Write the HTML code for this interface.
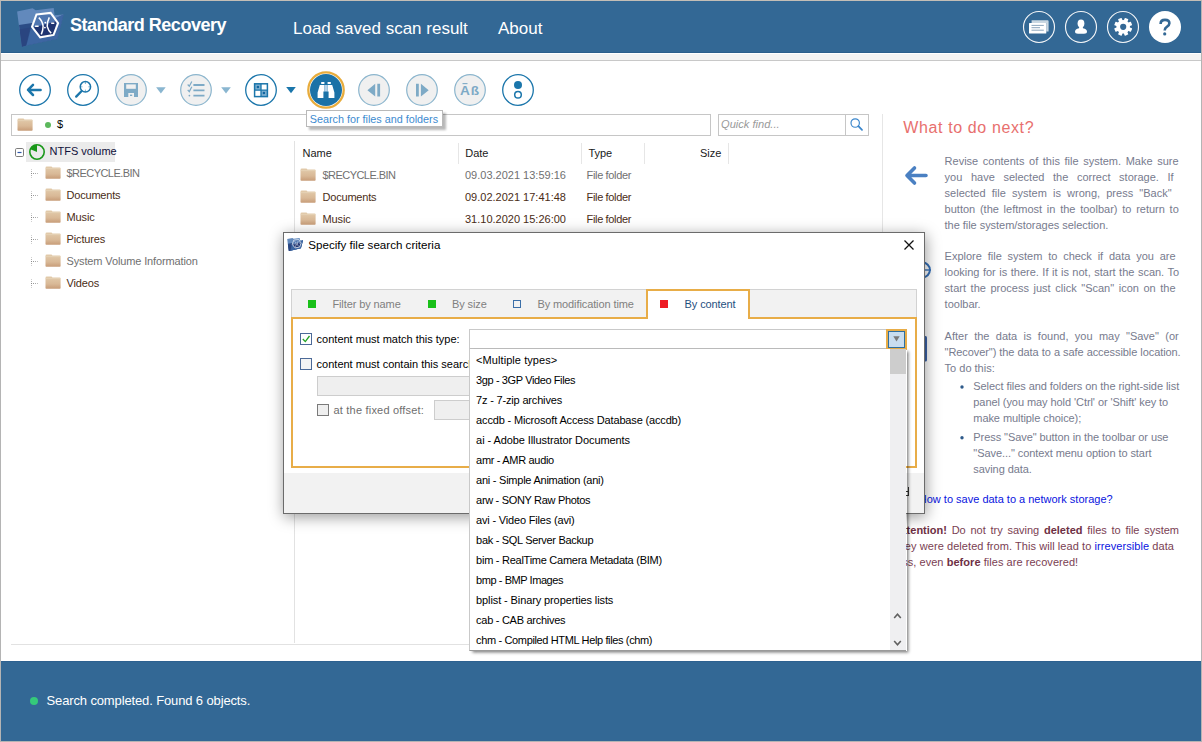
<!DOCTYPE html>
<html><head><meta charset="utf-8">
<style>
*{margin:0;padding:0;box-sizing:border-box}
html,body{width:1202px;height:742px;overflow:hidden;background:#fff;font-family:"Liberation Sans",sans-serif}
.a{position:absolute;white-space:nowrap;line-height:1}
svg{position:absolute;overflow:visible}
#frame{position:absolute;left:0;top:0;width:1202px;height:742px;border:1px solid #b4b4b4;border-top-color:#c4beb6}
#hdr{position:absolute;left:1px;top:1px;width:1200px;height:52px;background:#336895;border-bottom:1px solid #2a5e8c}
#strip{position:absolute;left:1px;top:53px;width:1200px;height:8px;background:#f3f3f3;border-top:1px solid #fff;border-bottom:1px solid #c8c8c8}
#status{position:absolute;left:1px;top:661px;width:1200px;height:80px;background:#336895;border-top:1px solid #2d6190}
.t11{font-size:11px}
</style></head><body>
<div id="frame"></div>
<div id="hdr"></div>
<div id="strip"></div>

<!-- header content -->
<svg style="left:0;top:0" width="1202" height="53">
  <g id="logo"><!-- logo folder -->
  <path d="M17.1 11.4 L32.6 8.3 L35.7 10.2 L53.7 8 L54.6 15.2 L63.6 14.5 L57.4 38.7 L26.4 45.5 L22 46.8 L19.5 30 Z" fill="#6289bc"/>
  <path d="M19 25 L54.9 19.5 L63.6 14.5 L57.4 38.7 L26.4 45.5 L22 46.8 L19.8 31 Z" fill="#2b4c86"/>
  <path d="M19.6 29.5 L30 27.5 L26 45.5 L22 46.8 Z" fill="#2a4580"/>
  <path d="M30.7 28.8 L63.6 14.5 L57.4 38.7 L26.4 45.5 Z" fill="#3d66a2"/>
  <path d="M37 15 L50.6 13.2 L57.8 23.2 L53.4 34.6 L40.4 37 L32.4 26.9 Z" fill="#4f76b0"/>
  <path d="M33.5 27.5 L57 21 L53.4 34.6 L40.4 37 Z" fill="#1f3470"/>
  <polygon points="36.5,14.4 50.6,12.9 58.1,23.2 53.6,34.9 40.2,37.3 32,26.9" fill="none" stroke="#fff" stroke-width="2"/>
  <path d="M38.8 17.6 Q42.6 21.2 43.1 26.3 Q43 31 41.3 34.4 M49.3 17.3 Q47.2 21.5 47.2 26.3 Q48.2 30.5 51.2 33.1 M35.1 26.2 H38.6 M51.2 23.3 H54.3" fill="none" stroke="#fff" stroke-width="1.5"/>
  <circle cx="45.3" cy="22.6" r="0.9" fill="#fff"/><circle cx="44.9" cy="27.6" r="0.9" fill="#fff"/>
  </g>
  <!-- right icons -->
  <circle cx="1039" cy="27" r="15.5" fill="none" stroke="#f4f6f8" stroke-width="1.15"/>
  <path d="M1031.6 20.2 H1047.6 Q1048.6 20.2 1048.6 21.2 V31.6 H1046.3 V23 H1031.6 Z" fill="#c9d7e2"/>
  <rect x="1029" y="23" width="17.3" height="10.6" rx="0.6" fill="#fff"/>
  <path d="M1031.5 25.4 H1043.8 M1031.5 27.7 H1040 M1031.5 30.2 H1043.8" stroke="#7e9bb6" stroke-width="0.9"/>
  <circle cx="1081" cy="27" r="15.5" fill="none" stroke="#f4f6f8" stroke-width="1.15"/>
  <ellipse cx="1081" cy="23.4" rx="3.4" ry="3.9" fill="#fff"/>
  <path d="M1079.3 26.5 H1082.7 L1083 28.3 Q1087 29 1087 31.8 Q1087 33.7 1084 33.7 H1078 Q1075 33.7 1075 31.8 Q1075 29 1079 28.3 Z" fill="#fff"/>
  <circle cx="1123" cy="27" r="15.5" fill="none" stroke="#f4f6f8" stroke-width="1.15"/>
  <g transform="translate(1123.2,26.8)">
    <circle r="6.8" fill="#fff"/>
    <g fill="#fff"><rect x="-1.9" y="-9" width="3.8" height="18" rx="0.5" transform="rotate(22.5)"/><rect x="-1.9" y="-9" width="3.8" height="18" rx="0.5" transform="rotate(67.5)"/><rect x="-1.9" y="-9" width="3.8" height="18" rx="0.5" transform="rotate(112.5)"/><rect x="-1.9" y="-9" width="3.8" height="18" rx="0.5" transform="rotate(157.5)"/></g>
    <circle r="3.1" fill="#336895"/>
  </g>
  <circle cx="1165" cy="27" r="16" fill="#fff"/>
  <path d="M1160.6 24 Q1160.6 19.9 1165 19.9 Q1169.4 19.9 1169.4 23.3 Q1169.4 25.3 1166.8 26.8 Q1164.7 28 1164.7 30.4" fill="none" stroke="#336895" stroke-width="2.6" stroke-linecap="butt"/>
  <circle cx="1164.7" cy="33.9" r="1.6" fill="#336895"/>
</svg>
<div class="a" style="left:70px;top:16px;font-size:18px;font-weight:bold;color:#fff;letter-spacing:-0.47px">Standard Recovery</div>
<div class="a" style="left:293px;top:19.6px;font-size:17px;color:#fff">Load saved scan result</div>
<div class="a" style="left:498px;top:19.6px;font-size:17px;color:#fff">About</div>

<!-- TOOLBAR -->
<svg id="tb" style="left:0;top:0" width="600" height="120">
  <g fill="none" stroke="#1b76ab" stroke-width="1.3">
    <circle cx="35" cy="90" r="15.3" fill="#fff"/>
    <circle cx="83" cy="90" r="15.3" fill="#fff"/>
    <circle cx="261" cy="90" r="15.3" fill="#fff"/>
    <circle cx="518" cy="90" r="15.3" fill="#fff"/>
  </g>
  <g fill="#f0f0f0" stroke="#8bb5cd" stroke-width="1.2">
    <circle cx="131" cy="90" r="15.3"/>
    <circle cx="196" cy="90" r="15.3"/>
    <circle cx="374" cy="90" r="15.3"/>
    <circle cx="422" cy="90" r="15.3"/>
    <circle cx="470" cy="90" r="15.3"/>
  </g>
  <!-- back arrow -->
  <path d="M28.2 89.9 H40.6 M33 84.8 L28 89.9 L33 95" fill="none" stroke="#1b76ab" stroke-width="2.5" stroke-linecap="round" stroke-linejoin="round"/>
  <!-- magnifier -->
  <circle cx="85.4" cy="86.8" r="5.2" fill="none" stroke="#1b76ab" stroke-width="1.5"/>
  <path d="M85.4 81.6 V84 M85.4 89.6 V92 M80.8 86.8 H82.5 M88.3 86.8 H90" stroke="#1b76ab" stroke-width="0.9" opacity="0.6"/>
  <path d="M81.4 91.2 L76.2 96.6" stroke="#1b76ab" stroke-width="2.3" stroke-linecap="round"/>
  <!-- floppy -->
  <path d="M124 83 H138 V97 H134 V93 H128.3 V97 H124 Z" fill="#7eaac6"/>
  <rect x="126.2" y="84.4" width="9.6" height="4.4" fill="#f0f0f0"/>
  <rect x="130" y="94.6" width="2.2" height="1.4" fill="#7eaac6"/>
  <!-- dropdown triangles -->
  <path d="M156.1 87.2 H165.7 L160.9 93.4 Z" fill="#8ab6d0"/>
  <path d="M221.2 87.2 H230.8 L226 93.4 Z" fill="#8ab6d0"/>
  <path d="M286.2 87 H295.8 L291 93.2 Z" fill="#1b76ab"/>
  <!-- checklist -->
  <path d="M193.4 85 H204.5 M193.4 90.3 H204.5 M193.4 95.6 H204.5" stroke="#7eaac6" stroke-width="1.8"/>
  <path d="M187.7 84.5 L189.3 86.3 L191.8 81.5 M187.7 89.8 L189.3 91.6 L191.8 86.8" fill="none" stroke="#7eaac6" stroke-width="1.2"/>
  <circle cx="189.4" cy="95.6" r="0.9" fill="#7eaac6"/>
  <!-- grid -->
  <rect x="254.6" y="83.8" width="6.4" height="6.4" fill="#7fb0d0"/><rect x="261" y="90.2" width="6.4" height="6.4" fill="#7fb0d0"/>
  <rect x="254.6" y="83.8" width="12.8" height="12.8" fill="none" stroke="#1b76ab" stroke-width="1.5"/>
  <path d="M261 83.8 V96.6 M254.6 90.2 H267.4" stroke="#1b76ab" stroke-width="1.3"/>
  <circle cx="257.9" cy="87" r="1.3" fill="#1266a0"/>
  <circle cx="263.9" cy="93" r="1.3" fill="#1266a0"/>
  <!-- binoculars -->
  <circle cx="326" cy="90" r="17.7" fill="#fff" stroke="#e8ac3c" stroke-width="2.3"/>
  <circle cx="326" cy="90" r="16" fill="#1b72a7"/>
  <path d="M321.2 82 H324.4 V84 H321.2 Z M327.6 82 H330.8 V84 H327.6 Z" fill="#fff"/>
  <path d="M319.8 85 H324.4 V91.5 H323.4 V98 H317.6 V92.5 Z" fill="#fff"/>
  <path d="M327.6 85 H332.2 L334.4 92.5 V98 H328.6 V91.5 H327.6 Z" fill="#fff"/>
  <rect x="324.4" y="85" width="3.2" height="6.5" fill="#b8d4ea"/>
  <!-- prev / next -->
  <path d="M367.4 90.2 L375.2 83.8 V96.6 Z M377.3 83.8 H380.1 V96.6 H377.3 Z" fill="#7eaac6"/>
  <path d="M428.7 90.2 L420.9 83.8 V96.6 Z M416 83.8 H418.8 V96.6 H416 Z" fill="#7eaac6"/>
  <!-- A-B -->
  <path d="M462.5 83.6 H467.5" stroke="#7eaac6" stroke-width="1.1"/>
  <text x="459.9" y="95.3" font-family="Liberation Sans" font-weight="bold" font-size="12.4" fill="#7eaac6" letter-spacing="1" transform="translate(459.9,95.3) scale(1.1,1) translate(-459.9,-95.3)">A&#223;</text>
  <!-- dots -->
  <circle cx="518" cy="85" r="4" fill="#1b76ab"/>
  <circle cx="518" cy="94.7" r="3.3" fill="none" stroke="#1b76ab" stroke-width="1.5"/>
</svg>

<!-- path bar -->
<div style="position:absolute;left:11px;top:114px;width:700px;height:22px;border:1px solid #c6c6c6;background:#fff"></div>
<div style="position:absolute;left:718px;top:114px;width:151px;height:22px;border:1px solid #c6c6c6;background:#fff"></div>
<div style="position:absolute;left:845px;top:115px;width:1px;height:20px;background:#c6c6c6"></div>
<div class="a" style="left:721px;top:119.4px;font-size:11.1px;font-style:italic;color:#9a9a9a">Quick find...</div>
<div style="position:absolute;left:882px;top:114px;width:1px;height:530px;background:#e6e6e6"></div>

<!-- left tree / file list -->
<div style="position:absolute;left:294px;top:141px;width:1px;height:502px;background:#e2e2e2"></div>
<div style="position:absolute;left:11px;top:644px;width:872px;height:1px;background:#e2e2e2"></div>

<svg width="0" height="0" style="position:absolute"><defs>
<linearGradient id="fg" x1="0" y1="0" x2="0" y2="1"><stop offset="0" stop-color="#e2cbab"/><stop offset="0.6" stop-color="#d9b997"/><stop offset="1" stop-color="#c79c78"/></linearGradient>
<symbol id="fold" viewBox="0 0 16 13"><path d="M0.5 2 Q0.5 0.6 1.8 0.6 H6.2 Q7 0.6 7.4 1.6 H14.6 Q15.6 1.6 15.6 2.6 V12 Q15.6 12.8 14.8 12.8 H1.3 Q0.5 12.8 0.5 12 Z" fill="url(#fg)"/><path d="M0.5 2.6 H15.6" stroke="#e9d6bd" stroke-width="0.6"/></symbol>
</defs></svg>
<svg style="left:17px;top:118px" width="16" height="13"><use href="#fold"/></svg>
<svg style="left:0;top:0" width="80" height="140"><circle cx="48" cy="125" r="3" fill="#5cb85c"/></svg>
<div class="a t11" style="left:57px;top:119.3px;color:#000">$</div>
<div style="position:absolute;left:309px;top:113px;width:137px;height:17px;background:rgba(0,0,0,0.28);filter:blur(1.2px)"></div>
<div style="position:absolute;left:306px;top:110px;width:137px;height:17px;background:#fff;border:1px solid #b9b9b9"></div>
<div class="a" style="left:309.7px;top:113.5px;font-size:10.8px;color:#3d8bd0">Search for files and folders</div>
<svg style="left:0;top:0" width="880" height="140"><circle cx="855.2" cy="123" r="4.2" fill="none" stroke="#3a86cc" stroke-width="1.15"/><path d="M858.4 126.2 L862 129.8" stroke="#3a86cc" stroke-width="1.8" stroke-linecap="round"/></svg>
<div style="position:absolute;left:26px;top:142px;width:89px;height:20px;background:#ebebeb"></div>
<svg style="left:0;top:0" width="300" height="300">
<rect x="15.5" y="148.5" width="8" height="8" rx="1.2" fill="#fff" stroke="#7c7c7c" stroke-width="1"/>
<path d="M17.5 152.5 H21.5" stroke="#2d55a8" stroke-width="1.2"/>
<circle cx="37" cy="152" r="7.2" fill="none" stroke="#1a981a" stroke-width="1.6"/>
<path d="M37 152 L37 144.8 A7.2 7.2 0 0 0 30.4 149.2 Z" fill="#1a981a"/>
<rect x="31" y="169" width="1" height="1" fill="#d0d0d0"/><rect x="31" y="171" width="1" height="1" fill="#b0b0b0"/><rect x="31" y="173" width="1" height="1" fill="#888"/><rect x="31" y="175" width="1" height="1" fill="#b0b0b0"/><rect x="31" y="177" width="1" height="1" fill="#d0d0d0"/><rect x="33" y="173" width="1" height="1" fill="#999"/><rect x="35" y="173" width="1" height="1" fill="#aaa"/><rect x="37" y="173" width="1" height="1" fill="#bbb"/><rect x="31" y="191" width="1" height="1" fill="#d0d0d0"/><rect x="31" y="193" width="1" height="1" fill="#b0b0b0"/><rect x="31" y="195" width="1" height="1" fill="#888"/><rect x="31" y="197" width="1" height="1" fill="#b0b0b0"/><rect x="31" y="199" width="1" height="1" fill="#d0d0d0"/><rect x="33" y="195" width="1" height="1" fill="#999"/><rect x="35" y="195" width="1" height="1" fill="#aaa"/><rect x="37" y="195" width="1" height="1" fill="#bbb"/><rect x="31" y="213" width="1" height="1" fill="#d0d0d0"/><rect x="31" y="215" width="1" height="1" fill="#b0b0b0"/><rect x="31" y="217" width="1" height="1" fill="#888"/><rect x="31" y="219" width="1" height="1" fill="#b0b0b0"/><rect x="31" y="221" width="1" height="1" fill="#d0d0d0"/><rect x="33" y="217" width="1" height="1" fill="#999"/><rect x="35" y="217" width="1" height="1" fill="#aaa"/><rect x="37" y="217" width="1" height="1" fill="#bbb"/><rect x="31" y="235" width="1" height="1" fill="#d0d0d0"/><rect x="31" y="237" width="1" height="1" fill="#b0b0b0"/><rect x="31" y="239" width="1" height="1" fill="#888"/><rect x="31" y="241" width="1" height="1" fill="#b0b0b0"/><rect x="31" y="243" width="1" height="1" fill="#d0d0d0"/><rect x="33" y="239" width="1" height="1" fill="#999"/><rect x="35" y="239" width="1" height="1" fill="#aaa"/><rect x="37" y="239" width="1" height="1" fill="#bbb"/><rect x="31" y="257" width="1" height="1" fill="#d0d0d0"/><rect x="31" y="259" width="1" height="1" fill="#b0b0b0"/><rect x="31" y="261" width="1" height="1" fill="#888"/><rect x="31" y="263" width="1" height="1" fill="#b0b0b0"/><rect x="31" y="265" width="1" height="1" fill="#d0d0d0"/><rect x="33" y="261" width="1" height="1" fill="#999"/><rect x="35" y="261" width="1" height="1" fill="#aaa"/><rect x="37" y="261" width="1" height="1" fill="#bbb"/><rect x="31" y="279" width="1" height="1" fill="#d0d0d0"/><rect x="31" y="281" width="1" height="1" fill="#b0b0b0"/><rect x="31" y="283" width="1" height="1" fill="#888"/><rect x="31" y="285" width="1" height="1" fill="#b0b0b0"/><rect x="31" y="287" width="1" height="1" fill="#d0d0d0"/><rect x="33" y="283" width="1" height="1" fill="#999"/><rect x="35" y="283" width="1" height="1" fill="#aaa"/><rect x="37" y="283" width="1" height="1" fill="#bbb"/>

</svg>
<svg style="left:45px;top:166px" width="16" height="13"><use href="#fold"/></svg>
<div class="a t11" style="left:66.5px;top:168.4px;color:#707070;letter-spacing:-0.55px">$RECYCLE.BIN</div>
<svg style="left:45px;top:188px" width="16" height="13"><use href="#fold"/></svg>
<div class="a t11" style="left:66.5px;top:190.4px;color:#4a2c16;letter-spacing:-0.2px">Documents</div>
<svg style="left:45px;top:210px" width="16" height="13"><use href="#fold"/></svg>
<div class="a t11" style="left:66.5px;top:212.4px;color:#4a2c16;letter-spacing:-0.13px">Music</div>
<svg style="left:45px;top:232px" width="16" height="13"><use href="#fold"/></svg>
<div class="a t11" style="left:66.5px;top:234.4px;color:#4a2c16;letter-spacing:-0.13px">Pictures</div>
<svg style="left:45px;top:254px" width="16" height="13"><use href="#fold"/></svg>
<div class="a t11" style="left:66.5px;top:256.4px;color:#707070;letter-spacing:-0.13px">System Volume Information</div>
<svg style="left:45px;top:276px" width="16" height="13"><use href="#fold"/></svg>
<div class="a t11" style="left:66.5px;top:278.4px;color:#4a2c16;letter-spacing:-0.13px">Videos</div>
<div class="a t11" style="left:49.5px;top:146.3px;color:#10103a">NTFS volume</div>
<div class="a t11" style="left:302.5px;top:147.5px;color:#1a1a1a">Name</div>
<div class="a t11" style="left:465.2px;top:147.5px;color:#1a1a1a">Date</div>
<div class="a t11" style="left:588.4px;top:147.5px;color:#1a1a1a">Type</div>
<div class="a t11" style="left:700px;top:147.5px;color:#1a1a1a">Size</div>
<div style="position:absolute;left:458px;top:143px;width:1px;height:21px;background:#e6e6e6"></div>
<div style="position:absolute;left:581px;top:143px;width:1px;height:21px;background:#e6e6e6"></div>
<div style="position:absolute;left:644px;top:143px;width:1px;height:21px;background:#e6e6e6"></div>
<div style="position:absolute;left:728px;top:143px;width:1px;height:21px;background:#e6e6e6"></div>
<svg style="left:300px;top:168px" width="16" height="13"><use href="#fold"/></svg>
<div class="a t11" style="left:322.5px;top:169.7px;color:#707070;letter-spacing:-0.55px">$RECYCLE.BIN</div>
<div class="a t11" style="left:465px;top:169.7px;color:#707070;letter-spacing:0px">09.03.2021 13:59:16</div>
<div class="a t11" style="left:586.6px;top:169.7px;color:#707070;letter-spacing:-0.35px">File folder</div>
<svg style="left:300px;top:190px" width="16" height="13"><use href="#fold"/></svg>
<div class="a t11" style="left:322.5px;top:191.7px;color:#4a2c16;letter-spacing:-0.2px">Documents</div>
<div class="a t11" style="left:465px;top:191.7px;color:#4a2c16;letter-spacing:0px">09.02.2021 17:41:48</div>
<div class="a t11" style="left:586.6px;top:191.7px;color:#4a2c16;letter-spacing:-0.35px">File folder</div>
<svg style="left:300px;top:212px" width="16" height="13"><use href="#fold"/></svg>
<div class="a t11" style="left:322.5px;top:213.7px;color:#4a2c16;letter-spacing:-0.13px">Music</div>
<div class="a t11" style="left:465px;top:213.7px;color:#4a2c16;letter-spacing:0px">31.10.2020 15:26:00</div>
<div class="a t11" style="left:586.6px;top:213.7px;color:#4a2c16;letter-spacing:-0.35px">File folder</div>
<div class="a" style="left:903.3px;top:119.7px;font-size:16px;color:#e8706e;letter-spacing:0.62px">What to do next?</div>
<svg style="left:0;top:0" width="1202" height="400">
<path d="M907 175.5 H926 M914.5 168 L907 175.5 L914.5 183" fill="none" stroke="#4a80c2" stroke-width="3.6" stroke-linecap="round" stroke-linejoin="round"/>
<circle cx="922.5" cy="270" r="7.4" fill="none" stroke="#3570b8" stroke-width="2"/>
<path d="M912 270 H931" stroke="#3570b8" stroke-width="1.4"/>
<rect x="915" y="336" width="12" height="25.6" rx="1.5" fill="#3a62a8"/>
</svg>
<div class="a" style="left:944.6px;top:155.79px;width:234px;font-size:11px;color:#777b8e;white-space:normal;text-align:justify;text-align-last:justify;">Revise contents of this file system. Make sure</div>
<div class="a" style="left:944.6px;top:171.79px;width:229px;font-size:11px;color:#777b8e;white-space:normal;text-align:justify;text-align-last:justify;">you have selected the correct storage. If</div>
<div class="a" style="left:944.6px;top:187.79px;width:227px;font-size:11px;color:#777b8e;white-space:normal;text-align:justify;text-align-last:justify;">selected file system is wrong, press &quot;Back&quot;</div>
<div class="a" style="left:944.6px;top:203.79px;width:234.2px;font-size:11px;color:#777b8e;white-space:normal;text-align:justify;text-align-last:justify;">button (the leftmost in the toolbar) to return to</div>
<div class="a" style="left:944.6px;top:219.79px;width:234.0px;font-size:11px;color:#777b8e;letter-spacing:-0.04px;">the file system/storages selection.</div>
<div class="a" style="left:944.6px;top:251.09px;width:231px;font-size:11px;color:#777b8e;white-space:normal;text-align:justify;text-align-last:justify;">Explore file system to check if data you are</div>
<div class="a" style="left:944.6px;top:267.09px;width:234.5px;font-size:11px;color:#777b8e;white-space:normal;text-align:justify;text-align-last:justify;">looking for is there. If it is not, start the scan. To</div>
<div class="a" style="left:944.6px;top:283.09px;width:231px;font-size:11px;color:#777b8e;white-space:normal;text-align:justify;text-align-last:justify;">start the process just click &quot;Scan&quot; icon on the</div>
<div class="a" style="left:944.6px;top:299.09px;width:234.0px;font-size:11px;color:#777b8e;">toolbar.</div>
<div class="a" style="left:944.6px;top:330.59px;width:234.1px;font-size:11px;color:#777b8e;white-space:normal;text-align:justify;text-align-last:justify;">After the data is found, you may &quot;Save&quot; (or</div>
<div class="a" style="left:944.6px;top:346.59px;width:236px;font-size:11px;color:#777b8e;letter-spacing:-0.08px;text-align:justify;text-align-last:justify;">&quot;Recover&quot;) the data to a safe accessible location.</div>
<div class="a" style="left:944.6px;top:362.59px;width:234.0px;font-size:11px;color:#777b8e;">To do this:</div>
<div class="a" style="left:973.3px;top:381.49px;width:210.0px;font-size:11px;color:#777b8e;letter-spacing:-0.07px;">Select files and folders on the right-side list</div>
<div class="a" style="left:973.3px;top:397.39px;width:210.0px;font-size:11px;color:#777b8e;letter-spacing:-0.07px;">panel (you may hold 'Ctrl' or 'Shift' key to</div>
<div class="a" style="left:973.3px;top:413.39px;width:210.0px;font-size:11px;color:#777b8e;letter-spacing:-0.07px;">make multiple choice);</div>
<div class="a" style="left:973.3px;top:432.19px;width:210.0px;font-size:11px;color:#777b8e;letter-spacing:-0.07px;">Press &quot;Save&quot; button in the toolbar or use</div>
<div class="a" style="left:973.3px;top:448.29px;width:210.0px;font-size:11px;color:#777b8e;letter-spacing:-0.07px;">&quot;Save...&quot; context menu option to start</div>
<div class="a" style="left:973.3px;top:464.09px;width:210.0px;font-size:11px;color:#777b8e;letter-spacing:-0.07px;">saving data.</div>
<svg style="left:0;top:0" width="1202" height="480"><circle cx="962" cy="387" r="1.7" fill="#2e5a8a"/><circle cx="962" cy="437.8" r="1.7" fill="#2e5a8a"/></svg>
<div class="a" style="left:918.8px;top:494.49px;font-size:11px;color:#0a14e0">How to save data to a network storage?</div>
<div class="a" style="left:895px;top:525.19px;width:284px;font-size:11px;color:#7a3e52;text-align:justify;text-align-last:justify;white-space:normal"><b style="color:#6e3044">Attention!</b> Do not try saving <b style="color:#6e3044">deleted</b> files to file system</div>
<div class="a" style="left:895.5px;top:541.19px;font-size:11px;color:#7a3e52;letter-spacing:0.07px">they were deleted from. This will lead to <span style="color:#0a14e0">irreversible</span> data</div>
<div class="a" style="left:893.5px;top:556.99px;font-size:11px;color:#7a3e52;letter-spacing:0.05px">loss, even <b style="color:#6e3044">before</b> files are recovered!</div>
<div style="position:absolute;left:283px;top:232px;width:642px;height:282px;box-shadow:1px 3px 14px rgba(0,0,0,0.4)"></div>
<div style="position:absolute;left:283px;top:232px;width:642px;height:282px;background:#fff;border:1px solid #6b6b6b"></div>
<div style="position:absolute;left:284px;top:473px;width:640px;height:40px;background:#f2f2f2"></div>
<div style="position:absolute;left:908px;top:487px;width:1.2px;height:9px;background:#333"></div><div style="position:absolute;left:906px;top:490.5px;width:1.5px;height:1.5px;background:#333"></div><div style="position:absolute;left:906px;top:494.5px;width:1.5px;height:1.5px;background:#333"></div>
<svg style="left:0;top:0" width="930" height="520">
<use href="#logo" transform="translate(281.4,235.2) scale(0.34)"/>
<path d="M904.5 240.5 L913.5 249.5 M913.5 240.5 L904.5 249.5" stroke="#111" stroke-width="1.25"/>
</svg>
<div class="a" style="left:308.3px;top:238.78px;font-size:11.6px;color:#000">Specify file search criteria</div>
<div style="position:absolute;left:291px;top:289px;width:626px;height:30px;background:#f2f2f2;border:1px solid #d2d2d2;border-bottom:none"></div>
<div style="position:absolute;left:291px;top:317px;width:626px;height:151px;background:#fff;border:2px solid #e8ad48"></div>
<div style="position:absolute;left:646px;top:289px;width:104px;height:30px;background:#fff;border:2px solid #e8ad48;border-bottom:none"></div>
<div style="position:absolute;left:308px;top:300px;width:8px;height:8px;background:#19c019"></div>
<div class="a" style="left:332.4px;top:299.1px;font-size:11px;color:#808080;letter-spacing:-0.1px">Filter by name</div>
<div style="position:absolute;left:428px;top:300px;width:8px;height:8px;background:#19c019"></div>
<div class="a" style="left:451.9px;top:299.1px;font-size:11px;color:#808080;letter-spacing:-0.1px">By size</div>
<div style="position:absolute;left:513px;top:300px;width:8px;height:8px;border:1px solid #3b6fa8"></div>
<div class="a" style="left:537.4px;top:299.1px;font-size:11px;color:#808080;letter-spacing:-0.1px">By modification time</div>
<div style="position:absolute;left:660px;top:300px;width:8px;height:8px;background:#ee1c24"></div>
<div class="a" style="left:684.6px;top:299.1px;font-size:11px;color:#1f5080;letter-spacing:-0.1px">By content</div>
<svg style="left:0;top:0" width="930" height="520">
<rect x="300.5" y="333.5" width="11" height="11" fill="#fff" stroke="#4c6a98" stroke-width="1"/>
<path d="M302.8 339 L305.3 341.6 L309.5 336" fill="none" stroke="#21a321" stroke-width="1.3"/>
<rect x="300.5" y="358.5" width="11" height="11" fill="#f4f4f4" stroke="#4c6a98" stroke-width="1"/>
<rect x="317.5" y="404.5" width="11" height="11" fill="#efefef" stroke="#7a7a7a" stroke-width="1"/>
</svg>
<div class="a" style="left:316.6px;top:333.99px;font-size:11px;color:#000">content must match this type:</div>
<div class="a" style="left:316.6px;top:358.99px;font-size:11px;color:#000">content must contain this search string:</div>
<div style="position:absolute;left:317px;top:376px;width:400px;height:20px;background:#efefef;border:1px solid #cdcdcd"></div>
<div class="a" style="left:333.5px;top:404.79px;font-size:11px;color:#6e6e6e;letter-spacing:0.2px">at the fixed offset:</div>
<div style="position:absolute;left:434px;top:400px;width:100px;height:20px;background:#efefef;border:1px solid #cdcdcd"></div>
<div style="position:absolute;left:469px;top:329px;width:438px;height:21px;background:#fff;border:1px solid #c9c9c9;border-bottom:2px solid #bdbdbd"></div>
<div style="position:absolute;left:886px;top:329px;width:21px;height:21px;background:#c9ddef;border:2px solid #e8ad48;outline:1px solid #2e6fa0;outline-offset:-3px"></div>
<svg style="left:0;top:0" width="930" height="520"><path d="M893.3 336.2 H899.7 L896.5 341.6 Z" fill="#7a7a7a"/></svg>
<div style="position:absolute;left:470px;top:349px;width:437px;height:302px;box-shadow:1.5px 1.5px 3px rgba(0,0,0,0.5)"></div>
<div style="position:absolute;left:469px;top:349px;width:437px;height:302px;background:#fff;border-left:1px solid #c9c9c9;border-bottom:1px solid #9a9a9a"></div>
<div style="position:absolute;left:890px;top:349px;width:16px;height:301px;background:#efeff1"></div>
<div style="position:absolute;left:890px;top:349px;width:16px;height:25px;background:#cdcdcd"></div>
<svg style="left:0;top:0" width="930" height="660"><path d="M894.2 618 L897.5 614.2 L900.8 618 M894.2 641 L897.5 644.8 L900.8 641" fill="none" stroke="#606060" stroke-width="1.6"/></svg>
<div class="a" style="left:476.1px;top:354.59px;font-size:11px;color:#000;letter-spacing:0.067px">&lt;Multiple types&gt;</div>
<div class="a" style="left:476.1px;top:374.59px;font-size:11px;color:#000;letter-spacing:-0.394px">3gp - 3GP Video Files</div>
<div class="a" style="left:476.1px;top:394.59px;font-size:11px;color:#000;letter-spacing:-0.178px">7z - 7-zip archives</div>
<div class="a" style="left:476.1px;top:414.59px;font-size:11px;color:#000;letter-spacing:-0.160px">accdb - Microsoft Access Database (accdb)</div>
<div class="a" style="left:476.1px;top:434.59px;font-size:11px;color:#000;letter-spacing:-0.082px">ai - Adobe Illustrator Documents</div>
<div class="a" style="left:476.1px;top:454.59px;font-size:11px;color:#000;letter-spacing:-0.316px">amr - AMR audio</div>
<div class="a" style="left:476.1px;top:474.59px;font-size:11px;color:#000;letter-spacing:-0.245px">ani - Simple Animation (ani)</div>
<div class="a" style="left:476.1px;top:494.59px;font-size:11px;color:#000;letter-spacing:-0.319px">arw - SONY Raw Photos</div>
<div class="a" style="left:476.1px;top:514.59px;font-size:11px;color:#000;letter-spacing:-0.179px">avi - Video Files (avi)</div>
<div class="a" style="left:476.1px;top:534.59px;font-size:11px;color:#000;letter-spacing:-0.313px">bak - SQL Server Backup</div>
<div class="a" style="left:476.1px;top:554.59px;font-size:11px;color:#000;letter-spacing:-0.263px">bim - RealTime Camera Metadata (BIM)</div>
<div class="a" style="left:476.1px;top:574.59px;font-size:11px;color:#000;letter-spacing:-0.437px">bmp - BMP Images</div>
<div class="a" style="left:476.1px;top:594.59px;font-size:11px;color:#000;letter-spacing:-0.108px">bplist - Binary properties lists</div>
<div class="a" style="left:476.1px;top:614.59px;font-size:11px;color:#000;letter-spacing:-0.277px">cab - CAB archives</div>
<div class="a" style="left:476.1px;top:634.59px;font-size:11px;color:#000;letter-spacing:-0.361px">chm - Compiled HTML Help files (chm)</div>
<div id="status"></div>
<svg style="left:0;top:661" width="60" height="80"><circle cx="34" cy="40" r="4" fill="#35c97a"/></svg>
<div class="a" style="left:46.5px;top:693.7px;font-size:13px;color:#fff;letter-spacing:-0.13px">Search completed. Found 6 objects.</div>
</body></html>
